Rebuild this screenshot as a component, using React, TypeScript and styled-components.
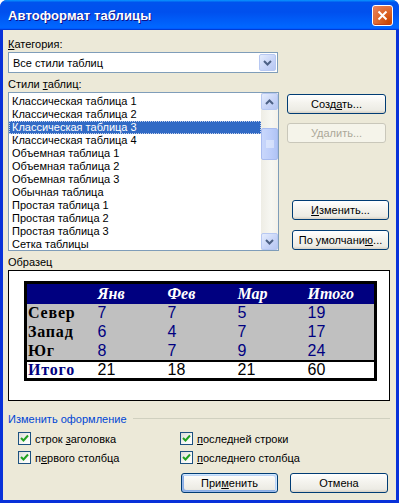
import React from "react";
import styled, { createGlobalStyle, css } from "styled-components";

const GlobalStyle = createGlobalStyle`
  html, body {
    margin: 0;
    padding: 0;
    background: #fff;
  }
  body {
    font-family: "Liberation Sans", Arial, sans-serif;
    font-size: 11px;
    color: #000;
  }
`;

const Window = styled.div`
  width: 399px;
  height: 503px;
  display: flex;
  flex-direction: column;
  border-radius: 7px 7px 0 0;
  overflow: hidden;
  background: #0831d9;
`;

const TitleBar = styled.div`
  height: 30px;
  flex: none;
  display: flex;
  align-items: center;
  justify-content: space-between;
  padding: 0 6px 0 8px;
  background: linear-gradient(
    180deg,
    #0997ff 0%,
    #0053ee 8%,
    #0050ee 40%,
    #0066ff 88%,
    #0066ff 93%,
    #005bff 95%,
    #003dd7 96%,
    #003dd7 100%
  );
`;

const Title = styled.span`
  font-weight: bold;
  font-size: 13px;
  color: #fff;
  text-shadow: 1px 1px #0f1089;
  letter-spacing: 0.1px;
`;

const CloseButton = styled.div`
  width: 19px;
  height: 19px;
  border: 1px solid #fff;
  border-radius: 3px;
  display: flex;
  align-items: center;
  justify-content: center;
  background: radial-gradient(circle at 85% 85%, #cc4600 0%, #dc6527 45%, #e5805a 90%);
  box-shadow: inset 0 -1px 1px #c13e17;
`;

const Body = styled.div`
  flex: 1;
  display: flex;
  flex-direction: column;
  background: #ece9d8;
  margin: 0 3px 3px 3px;
  padding: 8px 6px 0 5px;
`;

const Label = styled.div<{ $top?: number }>`
  height: 13px;
  line-height: 13px;
  margin-top: ${(p) => p.$top ?? 0}px;
  white-space: nowrap;
`;

const Accel = styled.span`
  text-decoration: underline;
  text-underline-offset: 1px;
`;

const Combo = styled.div`
  margin-top: 1px;
  width: 270px;
  height: 21px;
  box-sizing: border-box;
  border: 1px solid #7f9db9;
  background: #fff;
  display: flex;
  align-items: center;
  justify-content: space-between;
  padding: 0 1px 0 4px;
`;

const ScrollBtn = styled.div<{ $h?: number }>`
  width: 17px;
  height: ${(p) => p.$h ?? 17}px;
  box-sizing: border-box;
  border: 1px solid #b7c8f2;
  border-radius: 2px;
  background: linear-gradient(135deg, #e5edfd 0%, #c6d3f7 60%, #b7c7f2 100%);
  display: flex;
  align-items: center;
  justify-content: center;
  flex: none;
`;

const ListRow = styled.div`
  display: flex;
  margin-top: 1px;
`;

const ListBox = styled.div`
  width: 271px;
  height: 159px;
  box-sizing: border-box;
  border: 1px solid #7f9db9;
  background: #fff;
  display: flex;
`;

const Items = styled.div`
  flex: 1;
  padding-top: 2px;
  overflow: hidden;
`;

const Item = styled.div<{ $selected?: boolean }>`
  height: 13px;
  line-height: 13px;
  padding-left: 3px;
  white-space: nowrap;
  ${(p) =>
    p.$selected &&
    css`
      background: #316ac5;
      color: #fff;
      outline: 1px dotted #c6d1ea;
      outline-offset: -1px;
    `}
`;

const ScrollTrack = styled.div`
  width: 17px;
  display: flex;
  flex-direction: column;
  justify-content: space-between;
  background: linear-gradient(90deg, #eeede5 0%, #f7f7f2 60%, #f3f1ea 100%);
`;

const Thumb = styled(ScrollBtn)`
  margin-top: 18px;
  border-color: #a8bbef;
  background: linear-gradient(90deg, #c9d7fb 0%, #bccdfa 60%, #b0c4f5 100%);
`;

const ThumbArea = styled.div`
  flex: 1;
`;

const ButtonColumn = styled.div`
  flex: 1;
  display: flex;
  flex-direction: column;
`;

const XPButton = styled.div<{
  $w?: number;
  $h?: number;
  $indent?: number;
  $top?: number;
  $disabled?: boolean;
  $default?: boolean;
}>`
  width: ${(p) => p.$w ?? 99}px;
  height: ${(p) => p.$h ?? 20}px;
  margin-left: ${(p) => p.$indent ?? 0}px;
  margin-top: ${(p) => p.$top ?? 0}px;
  box-sizing: border-box;
  border: 1px solid #003c74;
  border-radius: 3px;
  display: flex;
  align-items: center;
  justify-content: center;
  white-space: nowrap;
  background: linear-gradient(180deg, #ffffff 0%, #f5f4ef 40%, #ecebe4 85%, #d6d0c5 100%);
  ${(p) =>
    p.$default &&
    css`
      box-shadow: inset -1px 1px #cee7ff, inset 1px -1px #98b8ea, inset -2px 2px #bcd4f6,
        inset 2px -2px #89ade4;
    `}
  ${(p) =>
    p.$disabled &&
    css`
      border-color: #c9c7ba;
      background: #f5f4ea;
      color: #aca899;
    `}
`;

const PreviewBox = styled.div`
  margin-top: 1px;
  height: 131px;
  box-sizing: border-box;
  border: 1px solid #000;
  background: #fff;
  padding: 10px 0 0 15px;
`;

const Sample = styled.table`
  width: 353px;
  border-collapse: collapse;
  border: 3px solid #000;
  table-layout: fixed;
`;

const HeadRow = styled.tr`
  background: #000080;
  height: 21px;
`;

const HeadCell = styled.th`
  padding: 0 0 0 2px;
  text-align: left;
  font-family: "Liberation Serif", "Times New Roman", serif;
  font-weight: bold;
  font-style: italic;
  font-size: 16px;
  color: #fff;
`;

const BodyRow = styled.tr<{ $total?: boolean }>`
  background: ${(p) => (p.$total ? "#fff" : "#c0c0c0")};
  height: ${(p) => (p.$total ? 18 : 19)}px;
  ${(p) =>
    p.$total &&
    css`
      border-top: 2px solid #000;
    `}
`;

const RowLabel = styled.td<{ $total?: boolean }>`
  padding: 0 0 0 1px;
  font-family: "Liberation Serif", "Times New Roman", serif;
  font-weight: bold;
  font-size: 16px;
  letter-spacing: 0.8px;
  line-height: 16px;
  color: ${(p) => (p.$total ? "#000080" : "#000")};
`;

const NumCell = styled.td<{ $total?: boolean }>`
  padding: 0 0 0 2px;
  font-family: "Liberation Sans", Arial, sans-serif;
  font-size: 16px;
  line-height: 16px;
  color: ${(p) => (p.$total ? "#000" : "#000080")};
`;

const GroupHeader = styled.div`
  margin-top: 11px;
  height: 13px;
  display: flex;
  align-items: center;
  gap: 6px;
  color: #0046d5;
  white-space: nowrap;
  &::after {
    content: "";
    flex: 1;
    height: 1px;
    background: #d0d0bf;
  }
`;

const Checks = styled.div`
  display: grid;
  grid-template-columns: 162px 1fr;
  row-gap: 6px;
  margin-top: 7px;
  padding-left: 10px;
`;

const CheckItem = styled.label`
  display: flex;
  align-items: center;
  gap: 4px;
  height: 13px;
  white-space: nowrap;
`;

const Box = styled.span`
  width: 13px;
  height: 13px;
  box-sizing: border-box;
  border: 1px solid #1c5180;
  background: linear-gradient(135deg, #dcdcd7 0%, #f7f7f5 60%, #fff 100%);
  display: flex;
  align-items: center;
  justify-content: center;
  flex: none;
`;

const Footer = styled.div`
  display: flex;
  justify-content: flex-end;
  gap: 12px;
  margin-top: 9px;
  padding-right: 2px;
`;

const Chevron = ({ up }: { up?: boolean }) => (
  <svg width="9" height="6" viewBox="0 0 9 6">
    <path
      d={up ? "M1 5 L4.5 1.5 L8 5" : "M1 1 L4.5 4.5 L8 1"}
      fill="none"
      stroke="#4d6185"
      strokeWidth="2"
    />
  </svg>
);

const Grip = () => (
  <svg width="8" height="8" viewBox="0 0 8 8">
    {[1, 3, 5, 7].map((y) => (
      <line key={y} x1="0" y1={y} x2="8" y2={y} stroke="#eef4fe" strokeWidth="1" />
    ))}
  </svg>
);

const Check = () => (
  <svg width="9" height="9" viewBox="0 0 9 9">
    <path d="M1 4 L3.5 6.5 L8 1.5" fill="none" stroke="#21a121" strokeWidth="2" />
  </svg>
);

const styles = [
  "Классическая таблица 1",
  "Классическая таблица 2",
  "Классическая таблица 3",
  "Классическая таблица 4",
  "Объемная таблица 1",
  "Объемная таблица 2",
  "Объемная таблица 3",
  "Обычная таблица",
  "Простая таблица 1",
  "Простая таблица 2",
  "Простая таблица 3",
  "Сетка таблицы",
];

const months = ["Янв", "Фев", "Мар", "Итого"];

const rows = [
  { name: "Север", values: [7, 7, 5, 19] },
  { name: "Запад", values: [6, 4, 7, 17] },
  { name: "Юг", values: [8, 7, 9, 24] },
];

function CheckOption({ children }: { children: React.ReactNode }) {
  return (
    <CheckItem>
      <Box>
        <Check />
      </Box>
      <span>{children}</span>
    </CheckItem>
  );
}

export default function App() {
  return (
    <>
      <GlobalStyle />
      <Window>
        <TitleBar>
          <Title>Автоформат таблицы</Title>
          <CloseButton>
            <svg width="11" height="11" viewBox="0 0 11 11">
              <path d="M1.5 1.5 L9.5 9.5 M9.5 1.5 L1.5 9.5" stroke="#fff" strokeWidth="2" />
            </svg>
          </CloseButton>
        </TitleBar>
        <Body>
          <Label>
            <Accel>К</Accel>атегория:
          </Label>
          <Combo>
            <span>Все стили таблиц</span>
            <ScrollBtn>
              <Chevron />
            </ScrollBtn>
          </Combo>
          <Label $top={5}>
            Стили <Accel>т</Accel>аблиц:
          </Label>
          <ListRow>
            <ListBox>
              <Items>
                {styles.map((s, i) => (
                  <Item key={s} $selected={i === 2}>
                    {s}
                  </Item>
                ))}
              </Items>
              <ScrollTrack>
                <ScrollBtn>
                  <Chevron up />
                </ScrollBtn>
                <ThumbArea>
                  <Thumb $h={32}>
                    <Grip />
                  </Thumb>
                </ThumbArea>
                <ScrollBtn>
                  <Chevron />
                </ScrollBtn>
              </ScrollTrack>
            </ListBox>
            <ButtonColumn>
              <XPButton $indent={8} $top={2}>
                <span>
                  Созд<Accel>а</Accel>ть...
                </span>
              </XPButton>
              <XPButton $indent={8} $top={9} $disabled>
                Удалить...
              </XPButton>
              <XPButton $indent={13} $w={97} $top={57}>
                <span>
                  <Accel>И</Accel>зменить...
                </span>
              </XPButton>
              <XPButton $indent={13} $w={97} $top={10}>
                <span>
                  По умолчани<Accel>ю</Accel>...
                </span>
              </XPButton>
            </ButtonColumn>
          </ListRow>
          <Label $top={5}>Образец</Label>
          <PreviewBox>
            <Sample>
              <tbody>
                <HeadRow>
                  <HeadCell />
                  {months.map((m) => (
                    <HeadCell key={m}>{m}</HeadCell>
                  ))}
                </HeadRow>
                {rows.map((r) => (
                  <BodyRow key={r.name}>
                    <RowLabel>{r.name}</RowLabel>
                    {r.values.map((v, i) => (
                      <NumCell key={i}>{v}</NumCell>
                    ))}
                  </BodyRow>
                ))}
                <BodyRow $total>
                  <RowLabel $total>Итого</RowLabel>
                  {[21, 18, 21, 60].map((v, i) => (
                    <NumCell key={i} $total>
                      {v}
                    </NumCell>
                  ))}
                </BodyRow>
              </tbody>
            </Sample>
          </PreviewBox>
          <GroupHeader>Изменить оформление</GroupHeader>
          <Checks>
            <CheckOption>
              строк <Accel>з</Accel>аголовка
            </CheckOption>
            <CheckOption>
              <Accel>п</Accel>оследней строки
            </CheckOption>
            <CheckOption>
              п<Accel>е</Accel>рвого столбца
            </CheckOption>
            <CheckOption>
              <Accel>п</Accel>оследнего столбца
            </CheckOption>
          </Checks>
          <Footer>
            <XPButton $w={97} $default>
              <span>
                При<Accel>м</Accel>енить
              </span>
            </XPButton>
            <XPButton $w={98}>Отмена</XPButton>
          </Footer>
        </Body>
      </Window>
    </>
  );
}
